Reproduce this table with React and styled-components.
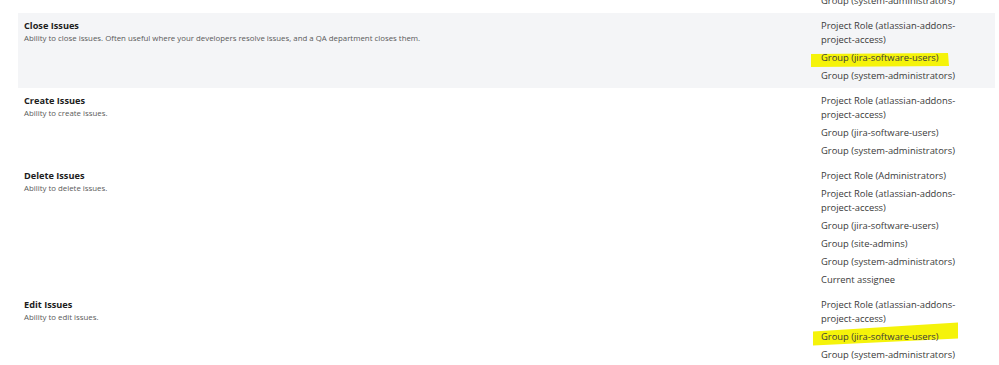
import React from "react";
import styled, { createGlobalStyle } from "styled-components";

const Global = createGlobalStyle`
  html, body { margin: 0; padding: 0; background: #fff; }
  body { font-family: "Open Sans", "Noto Sans", sans-serif; }
`;

const Viewport = styled.div`
  width: 999px;
  height: 365px;
  overflow: hidden;
`;

const Table = styled.div`
  margin: -12px 4px 0 18px;
  display: flex;
  flex-direction: column;
`;

const Row = styled.div`
  display: grid;
  grid-template-columns: 1fr 174px;
  padding: 6px 0 5px;
  background: ${(p) => (p.$shaded ? "#f4f5f7" : "transparent")};
`;

const PermCell = styled.div`
  padding-left: 6px;
  display: flex;
  flex-direction: column;
`;

const Title = styled.div`
  font-size: 9.2px;
  font-weight: 700;
  line-height: 14px;
  color: #1d1d1d;
`;

const Desc = styled.div`
  font-size: 7.85px;
  line-height: 10px;
  color: #5a5a5a;
`;

const GrantList = styled.ul`
  list-style: none;
  margin: 0;
  padding: 0 27px 0 0;
  display: flex;
  flex-direction: column;
  gap: 4px;
`;

const Grant = styled.li`
  position: relative;
  font-size: 9.4px;
  line-height: 14px;
  color: #3a3a3a;
`;

const GrantText = styled.span`
  position: relative;
  z-index: 1;
`;

const Marker = styled.svg`
  position: absolute;
  left: -10px;
  top: ${(p) => p.$top}px;
  width: 150px;
  height: 28px;
  z-index: 0;
  pointer-events: none;
`;

const rows = [
  { title: null, grants: [{ t: "Group (system-administrators)" }] },
  {
    title: "Close Issues",
    desc: "Ability to close issues. Often useful where your developers resolve issues, and a QA department closes them.",
    shaded: true,
    grants: [
      { t: "Project Role (atlassian-addons-project-access)" },
      { t: "Group (jira-software-users)", mark: "flat" },
      { t: "Group (system-administrators)" },
    ],
  },
  {
    title: "Create Issues",
    desc: "Ability to create issues.",
    grants: [
      { t: "Project Role (atlassian-addons-project-access)" },
      { t: "Group (jira-software-users)" },
      { t: "Group (system-administrators)" },
    ],
  },
  {
    title: "Delete Issues",
    desc: "Ability to delete issues.",
    grants: [
      { t: "Project Role (Administrators)" },
      { t: "Project Role (atlassian-addons-project-access)" },
      { t: "Group (jira-software-users)" },
      { t: "Group (site-admins)" },
      { t: "Group (system-administrators)" },
      { t: "Current assignee" },
    ],
  },
  {
    title: "Edit Issues",
    desc: "Ability to edit issues.",
    grants: [
      { t: "Project Role (atlassian-addons-project-access)" },
      { t: "Group (jira-software-users)", mark: "slant" },
      { t: "Group (system-administrators)" },
    ],
  },
];

function Highlight({ kind }) {
  if (kind === "flat") {
    return (
      <Marker $top={-5} viewBox="0 0 150 28">
        <polygon points="0,8 137,7 138,20 0,21" fill="#f5f30a" />
      </Marker>
    );
  }
  return (
    <Marker $top={-10} viewBox="0 0 150 28">
      <polygon points="2,11.5 147,2.5 147,18.5 2,25.5" fill="#f5f30a" />
    </Marker>
  );
}

export default function App() {
  return (
    <Viewport>
      <Global />
      <Table>
        {rows.map((r, i) => (
          <Row key={i} $shaded={r.shaded}>
            <PermCell>
              {r.title && <Title>{r.title}</Title>}
              {r.desc && <Desc>{r.desc}</Desc>}
            </PermCell>
            <GrantList>
              {r.grants.map((g, j) => (
                <Grant key={j}>
                  {g.mark && <Highlight kind={g.mark} />}
                  <GrantText>{g.t}</GrantText>
                </Grant>
              ))}
            </GrantList>
          </Row>
        ))}
      </Table>
    </Viewport>
  );
}
